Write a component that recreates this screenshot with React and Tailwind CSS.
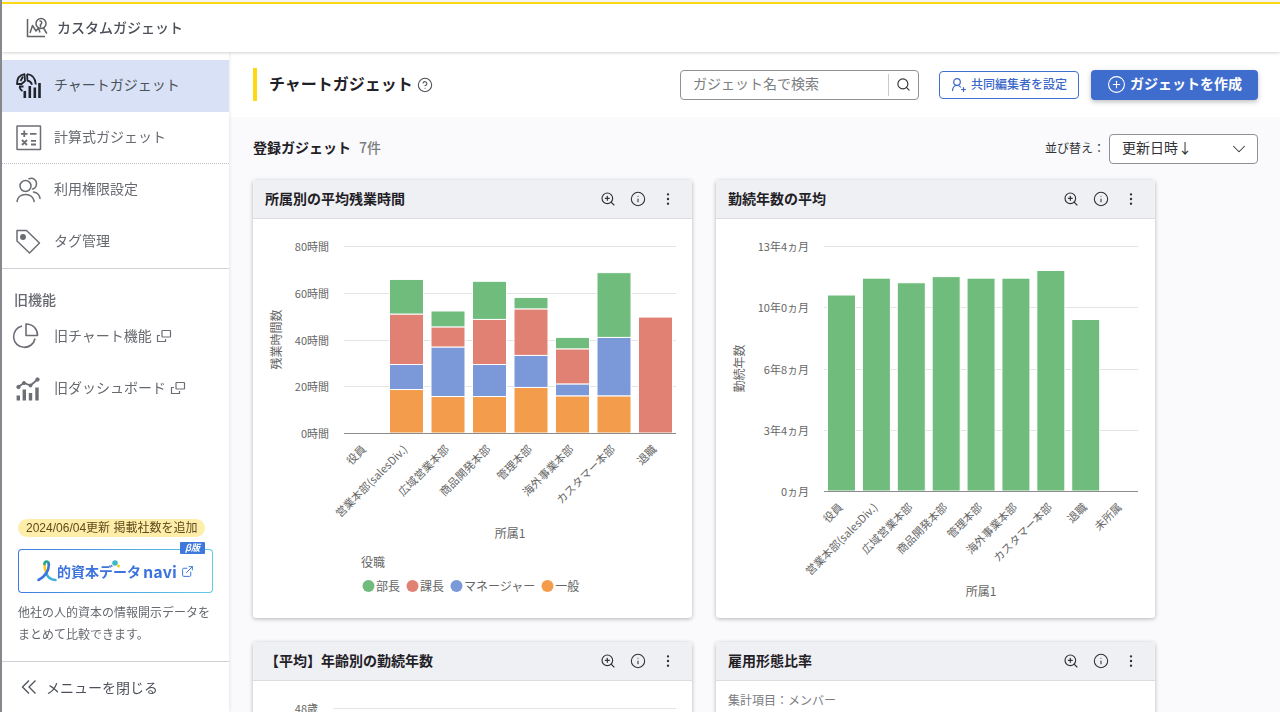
import { ChevronDown, CirclePlus, CircleQuestionMark, EllipsisVertical, ExternalLink, Info, Search, ZoomIn } from 'lucide-react';

const GREEN = '#6fbc7c';
const RED = '#e18174';
const BLUE = '#7b99d8';
const ORANGE = '#f39c4b';

const DEPARTMENTS = [
  '役員',
  '営業本部(salesDiv.)',
  '広域営業本部',
  '商品開発本部',
  '管理本部',
  '海外事業本部',
  'カスタマー本部',
  '退職',
];

const overtimeSeries = [
  { name: '部長', color: GREEN },
  { name: '課長', color: RED },
  { name: 'マネージャー', color: BLUE },
  { name: '一般', color: ORANGE },
];

// Hours per department, stacked from the bottom: 一般, マネージャー, 課長, 部長
const overtime = [
  [0, 0, 0, 0],
  [18.6, 10.7, 21.6, 14.8],
  [15.6, 21.2, 8.6, 6.8],
  [15.6, 13.7, 19.3, 16.3],
  [19.5, 13.7, 19.9, 4.9],
  [15.9, 5.1, 15, 4.9],
  [15.9, 25, 0, 27.7],
  [0, 0, 49.6, 0],
];

// Average tenure in months
const tenure = [128, 139, 136, 140, 139, 139, 144, 112, 0];

/* ---------- Icons ---------- */

function LogoIcon() {
  return (
    <svg viewBox="0 0 22 22" className="size-[22px] shrink-0" fill="none" stroke="#606266" strokeWidth="1.5">
      <path d="M1.500 2v17.500H19" />
      <path d="M4 16L6.500 8.500 10 14 12.500 11 14 15.500" strokeLinejoin="round" />
      <circle cx="15" cy="6.500" r="5" />
      <path d="M17.500 11l3 5M14.500 10V7.500c2-1 1.500-3.500-.5-3.500" strokeLinecap="round" />
    </svg>
  );
}

function ChartGadgetIcon() {
  return (
    <svg viewBox="0 0 26 26" className="size-[26px]" fill="none" stroke="#20242b" strokeWidth="1.8">
      <path d="M1 11C1 5.500 3.500 2 8.500 1.200L9 8 5.500 11Z" strokeLinejoin="round" />
      <path d="M4.500 8L7 3.500" />
      <path d="M11 1.200c5 .3 8.300 4.300 8.800 10.300M11 1.200l.5 6.500c2.500.5 4 2 4.500 4" strokeLinejoin="round" />
      <path d="M3 13.500h4.500M3.500 14c.5 2 1.500 3 3 4" />
      <path d="M8.800 18V25M13.800 13V25M18.800 14.500V25M23.500 10V25" strokeWidth="2.600" />
    </svg>
  );
}

function FormulaIcon() {
  return (
    <svg viewBox="0 0 26 26" className="size-[26px]" fill="none" stroke="#6b6e74" strokeWidth="1.5">
      <rect x="1" y="1" width="23.500" height="23.500" rx=".5" />
      <path d="M5 8.800h6.500M8.250 5.500v6.500M14 8.800h6.500" strokeWidth="1.800" />
      <path d="M6 15l5 5M11 15l-5 5M15 15.800h5M15 19.500h5" strokeWidth="1.800" />
    </svg>
  );
}

function PeopleIcon() {
  return (
    <svg viewBox="0 0 26 26" className="size-[26px]" fill="none" stroke="#6b6e74" strokeWidth="1.5" strokeLinecap="round">
      <circle cx="9.500" cy="9" r="5.500" />
      <path d="M1 24.500c.8-4.500 4-7 8.500-7s7.800 2.500 8.700 7" />
      <path d="M13 1.800c4.500-1.500 7.500 1.200 7.500 4.700 0 3-2 5-4 5.500M17.500 15c3.500.5 6 3 6.500 6.500" />
    </svg>
  );
}

function TagIcon() {
  return (
    <svg viewBox="0 0 26 26" className="size-[26px]" fill="none" stroke="#6b6e74" strokeWidth="1.5" strokeLinejoin="round">
      <path d="M1 1.500h9.500L23.500 14 13.500 24 1 12Z" />
      <circle cx="7" cy="8" r="2.200" fill="#6b6e74" />
    </svg>
  );
}

function PieIcon() {
  return (
    <svg viewBox="1 1 26 26" className="size-[26px] overflow-visible" fill="none" stroke="#6b6e74" strokeWidth="1.600">
      <path d="M7 3A10.800 10.800 0 1 0 20 15.500" />
      <path d="M11 1V12.500H22.500C22.500 6 18 1 11 1Z" strokeLinejoin="round" />
    </svg>
  );
}

function DashboardIcon() {
  return (
    <svg viewBox="0 0 26 26" className="size-[26px]" fill="#6b6e74" stroke="#6b6e74">
      <path d="M2 11L8 7 14.500 9.500 21.500 3.500" fill="none" strokeWidth="1.800" />
      <circle cx="2.500" cy="11" r="1.700" />
      <circle cx="8" cy="7" r="1.500" />
      <circle cx="14.500" cy="9.500" r="1.500" />
      <circle cx="21.500" cy="3.500" r="1.700" />
      <path d="M2.300 19.500v5M8.300 13.500v11M14.500 17v7.500M21 11.500v13" fill="none" strokeWidth="3.400" />
    </svg>
  );
}

function NewWindowIcon() {
  return (
    <svg viewBox="0 0 16 14" className="mt-0.5 h-[14px] w-4" fill="none" stroke="#6b6e74" strokeWidth="1.200">
      <rect x="6" y="1.500" width="8.500" height="6.500" rx=".5" />
      <path d="M4 6.500H1.500v6h8V10" />
    </svg>
  );
}

function CollapseIcon() {
  return (
    <svg viewBox="0 0 20 20" className="size-5" fill="none" stroke="#4d5159" strokeWidth="1.300">
      <path d="M11 3.500L4.500 10l6.500 6.500M17.500 3.500L11 10l6.500 6.500" />
    </svg>
  );
}

function AddUserIcon() {
  return (
    <svg viewBox="0 0 16 16" className="size-4" fill="none" stroke="currentColor" strokeWidth="1.200" strokeLinecap="round">
      <circle cx="6" cy="5" r="3.300" />
      <path d="M1.500 13.500c.3-3 2-5 4.500-5 1.500 0 2.700.5 3.500 1.500M12.500 10.500v4M10.500 12.500h4" />
    </svg>
  );
}

function HitoMark() {
  return (
    <svg viewBox="0 0 20 22" className="h-[22px] w-5 shrink-0" fill="none" strokeWidth="2.600" strokeLinecap="round">
      <path d="M9 12.500C10 16.500 13 19.500 18.500 20" stroke="#3bb4dc" />
      <path d="M7.500 4c0 3 .3 5.500 1.500 8" stroke="#f7cf1d" />
      <path d="M7.500 4c.2-3.200 4-3.200 4.300 0" stroke="#2aa78f" />
      <path d="M11.800 4c.4 6.500-3.800 13-10.300 16" stroke="#3c73dd" />
    </svg>
  );
}

function LogoDots() {
  return (
    <svg viewBox="0 0 10 8" className="absolute -top-px left-[54px] h-2 w-2.5">
      <circle cx="4" cy="3" r="2.800" fill="#3fb8c9" />
      <circle cx="7.500" cy="6" r="1.500" fill="#f7cf1d" />
    </svg>
  );
}

/* ---------- Sidebar ---------- */

const navItemBase = 'flex h-[52px] items-center gap-3 pl-[14px] text-sm';

function NavItem({ icon, label, active, external, divider }) {
  return (
    <a
      href="#"
      className={[
        navItemBase,
        active ? 'bg-[#d8e1f5] text-[#4d5159]' : 'text-[#66696f]',
        divider ? 'border-b border-dotted border-[#bfc1c5]' : '',
      ].join(' ')}
    >
      {icon}
      <span className="flex items-center gap-1 pb-1">
        {label}
        {external && <NewWindowIcon />}
      </span>
    </a>
  );
}

function Sidebar() {
  return (
    <aside className="z-10 flex w-[227px] shrink-0 flex-col bg-white pt-2 shadow-[0_0_4px_rgba(0,0,0,0.12)]">
      <nav>
        <NavItem icon={<ChartGadgetIcon />} label="チャートガジェット" active />
        <NavItem icon={<FormulaIcon />} label="計算式ガジェット" divider />
        <NavItem icon={<PeopleIcon />} label="利用権限設定" />
        <div className="border-b border-[#cfd1d4]">
          <NavItem icon={<TagIcon />} label="タグ管理" />
        </div>
        <h2 className="mt-5 mb-0.5 pl-3 text-sm leading-5 font-medium text-[#66696f]">旧機能</h2>
        <NavItem icon={<PieIcon />} label="旧チャート機能" external />
        <NavItem icon={<DashboardIcon />} label="旧ダッシュボード" external />
      </nav>

      <section className="mt-auto px-4 pb-4">
        <p className="w-fit rounded-full bg-[#feeeaa] px-2 font-['Liberation_Sans','Noto_Sans_CJK_JP',sans-serif] text-xs leading-[18px] text-[#5f4a1c]">
          2024/06/04更新 掲載社数を追加
        </p>
        <a href="#" className="relative mt-3 block rounded-[4px] bg-linear-to-r from-[#3f7be0] to-[#62cbe4] p-px">
          <span className="flex h-[42px] items-center rounded-[3px] bg-white pl-[18px] font-bold text-[#3c73dd]">
            <HitoMark />
            <span className="relative text-sm">
              的資本データ
              <LogoDots />
            </span>
            <span className="ml-0.5 text-base">navi</span>
            <ExternalLink className="ml-1 size-[13px]" strokeWidth={1.8} />
          </span>
          <span className="absolute -top-[7px] right-2 rounded-[1px] bg-[#3f78dc] px-[5px] text-[9px] leading-3 font-bold text-white italic">β版</span>
        </a>
        <p className="mt-2 text-xs leading-[22px] text-[#66696f]">
          他社の人的資本の情報開示データをまとめて比較できます。
        </p>
      </section>

      <button className="flex h-[51px] shrink-0 items-center gap-2 border-t border-[#cfd1d4] pl-4 text-sm text-[#4d5159]">
        <CollapseIcon />
        メニューを閉じる
      </button>
    </aside>
  );
}

/* ---------- Charts ---------- */

function AxisFrame({ left, right, top, bottom, ticks, yTitle, xTitle, labels }) {
  const slot = (right - left) / labels.length;
  const step = (bottom - top) / (ticks.length - 1);
  const middle = (top + bottom) / 2;
  return (
    <g fontSize="11" fill="#666">
      {ticks.map((tick, i) => (
        <g key={tick}>
          <line
            x1={left}
            x2={right}
            y1={Math.round(top + step * i) + 0.5}
            y2={Math.round(top + step * i) + 0.5}
            stroke={i === ticks.length - 1 ? '#8c8c8c' : '#e4e4e6'}
          />
          <text x={left - 15} y={top + step * i + 5} textAnchor="end">{tick}</text>
        </g>
      ))}
      {labels.map((label, i) => {
        const x = left + slot * (i + 0.5) + 2;
        const y = bottom + 17;
        return (
          <text key={label} x={x} y={y} textAnchor="end" transform={`rotate(-45 ${x} ${y})`}>{label}</text>
        );
      })}
      <text x="28" y={middle} fontSize="12" textAnchor="middle" transform={`rotate(-90 28 ${middle})`}>
        {yTitle}
      </text>
      <text x={(left + right) / 2} y={bottom + 105} fontSize="12" textAnchor="middle">{xTitle}</text>
    </g>
  );
}

function OvertimeChart() {
  const left = 91;
  const right = 423;
  const top = 27;
  const bottom = 214;
  const slot = (right - left) / overtime.length;
  const stackColors = [ORANGE, BLUE, RED, GREEN];
  return (
    <div>
      <svg viewBox="0 0 439 331" className="block w-full">
        <AxisFrame
          left={left}
          right={right}
          top={top}
          bottom={bottom}
          ticks={['80時間', '60時間', '40時間', '20時間', '0時間']}
          yTitle="残業時間数"
          xTitle="所属1"
          labels={DEPARTMENTS}
        />
        {overtime.map((stack, i) => {
          let y = bottom;
          return stack.map((hours, j) => {
            const h = (hours / 80) * (bottom - top);
            y -= h;
            return hours > 0 && (
              <rect
                key={`${i}-${j}`}
                x={left + slot * i + 4}
                y={y}
                width="34"
                height={h}
                fill={stackColors[j]}
                stroke="#fff"
              />
            );
          });
        })}
        <line x1={left} x2={right} y1="214.500" y2="214.500" stroke="#8c8c8c" />
      </svg>
      <div className="pl-[108px] text-xs text-[#666]">
        <p className="leading-6">役職</p>
        <ul className="flex gap-[5px] leading-6">
          {overtimeSeries.map((s) => (
            <li key={s.name} className="flex items-center gap-px">
              <svg viewBox="0 0 14 14" className="size-[14px]">
                <circle cx="7.500" cy="7" r="6" fill={s.color} />
              </svg>
              {s.name}
            </li>
          ))}
        </ul>
      </div>
    </div>
  );
}

function TenureChart() {
  const left = 108;
  const right = 422;
  const top = 27;
  const bottom = 272;
  const slot = (right - left) / tenure.length;
  return (
    <svg viewBox="0 0 439 398" className="block w-full">
      <AxisFrame
        left={left}
        right={right}
        top={top}
        bottom={bottom}
        ticks={['13年4ヵ月', '10年0ヵ月', '6年8ヵ月', '3年4ヵ月', '0ヵ月']}
        yTitle="勤続年数"
        xTitle="所属1"
        labels={[...DEPARTMENTS, '未所属']}
      />
      {tenure.map((months, i) => {
        const h = (months / 160) * (bottom - top);
        return months > 0 && (
          <rect key={i} x={left + slot * i + 3.5} y={bottom - h} width="28" height={h} fill={GREEN} stroke="#fff" />
        );
      })}
      <line x1={left} x2={right} y1="272.500" y2="272.500" stroke="#8c8c8c" />
    </svg>
  );
}

function AgeChart() {
  return (
    <svg viewBox="0 0 439 398" className="block w-full">
      <text x="65" y="32" fontSize="11" fill="#666" textAnchor="end">48歳</text>
      <line x1="80" x2="423" y1="27.500" y2="27.500" stroke="#e4e4e6" />
    </svg>
  );
}

/* ---------- Main ---------- */

function GadgetCard({ title, children }) {
  return (
    <article className="min-h-[438px] rounded-[3px] bg-white shadow-[0_1px_4px_rgba(0,0,0,0.28)]">
      <header className="flex h-[39px] items-center justify-between rounded-t-[3px] border-b border-[#dcdde1] bg-[#eff0f4] pr-[9px] pl-3">
        <h3 className="pb-0.5 text-sm font-bold text-[#1f2126]">{title}</h3>
        <div className="flex text-[#303236]">
          <button aria-label="拡大" className="flex size-[30px] items-center justify-center">
            <ZoomIn className="size-4" strokeWidth={1.7} />
          </button>
          <button aria-label="詳細" className="flex size-[30px] items-center justify-center">
            <Info className="size-4" strokeWidth={1.6} />
          </button>
          <button aria-label="メニュー" className="flex size-[30px] items-center justify-center">
            <EllipsisVertical className="size-4" strokeWidth={1.6} />
          </button>
        </div>
      </header>
      {children}
    </article>
  );
}

function Toolbar() {
  return (
    <div className="flex h-[65px] shrink-0 items-center bg-white pr-[22px] pl-6">
      <h1 className="flex h-[33px] items-center border-l-4 border-[#ffd814] pb-[3px] pl-3 text-base font-bold text-[#1f2126]">
        チャートガジェット
      </h1>
      <CircleQuestionMark className="ml-1 size-4 text-[#4d5159]" strokeWidth={1.6} />
      <form className="ml-auto flex h-[30px] w-[239px] items-center rounded-[4px] border border-[#8e9196] bg-white">
        <input
          type="text"
          aria-label="ガジェット名で検索"
          placeholder="ガジェット名で検索"
          className="min-w-0 flex-1 pb-[3px] pl-3 text-sm outline-none placeholder:text-[#7b7d82]"
        />
        <button type="button" aria-label="検索" className="flex h-[22px] w-[30px] items-center justify-center border-l border-[#c8cacd] text-[#303236]">
          <Search className="size-[15px]" strokeWidth={1.8} />
        </button>
      </form>
      <button className="ml-5 flex h-7 items-center gap-1 rounded-[4px] border border-[#3f6fd0] bg-white px-[11px] text-xs font-medium text-[#3a66c8]">
        <AddUserIcon />
        <span className="pb-0.5">共同編集者を設定</span>
      </button>
      <button className="ml-3 flex h-[30px] items-center gap-1 rounded-[4px] bg-[#3f6dcd] px-4 text-sm font-bold text-white shadow-[0_2px_5px_rgba(0,0,0,0.25)]">
        <CirclePlus className="size-[19px]" strokeWidth={1.4} />
        <span className="pb-[3px]">ガジェットを作成</span>
      </button>
    </div>
  );
}

export default function App() {
  return (
    <div className="flex h-screen overflow-hidden border-l-2 border-[#85888d] bg-white font-['Noto_Sans_CJK_JP',sans-serif] text-[#303236]">
      <div className="flex min-w-0 flex-1 flex-col">
        <header className="z-20 flex h-[52px] shrink-0 border-t-2 border-[#f4f4f4] bg-white shadow-[0_1px_3px_rgba(0,0,0,0.18)]">
          <div className="flex flex-1 items-center gap-[9px] border-t-2 border-[#ffd814] pl-6 text-[#4d5159]">
            <LogoIcon />
            <span className="pb-0.5 text-sm font-medium">カスタムガジェット</span>
          </div>
        </header>

        <div className="flex min-h-0 flex-1">
          <Sidebar />
          <main className="flex min-w-0 flex-1 flex-col overflow-y-auto bg-[#fafafc] [scrollbar-width:none]">
            <Toolbar />
            <div className="pr-[22px] pl-6">
              <div className="flex h-[63px] items-center text-sm">
                <h2 className="pb-[3px] font-bold text-[#1f2126]">登録ガジェット</h2>
                <span className="ml-2 pb-[3px] font-medium text-[#7b7d82]">7件</span>
                <label htmlFor="sort" className="ml-auto pb-0.5 text-xs">並び替え：</label>
                <div className="relative ml-1">
                  <select id="sort" className="h-[30px] w-[149px] appearance-none rounded-[4px] border border-[#8e9196] bg-white pb-[3px] pl-3 text-sm">
                    <option>更新日時↓</option>
                  </select>
                  <ChevronDown className="pointer-events-none absolute top-1 right-2 size-[22px]" strokeWidth={1.1} />
                </div>
              </div>

              <div className="grid grid-cols-[repeat(auto-fill,439px)] gap-6 pb-6">
                <GadgetCard title="所属別の平均残業時間">
                  <OvertimeChart />
                </GadgetCard>
                <GadgetCard title="勤続年数の平均">
                  <TenureChart />
                </GadgetCard>
                <GadgetCard title="【平均】年齢別の勤続年数">
                  <AgeChart />
                </GadgetCard>
                <GadgetCard title="雇用形態比率">
                  <p className="px-3 py-[7px] text-xs leading-6 text-[#7b7d82]">集計項目：メンバー</p>
                </GadgetCard>
              </div>
            </div>
          </main>
        </div>
      </div>
    </div>
  );
}
